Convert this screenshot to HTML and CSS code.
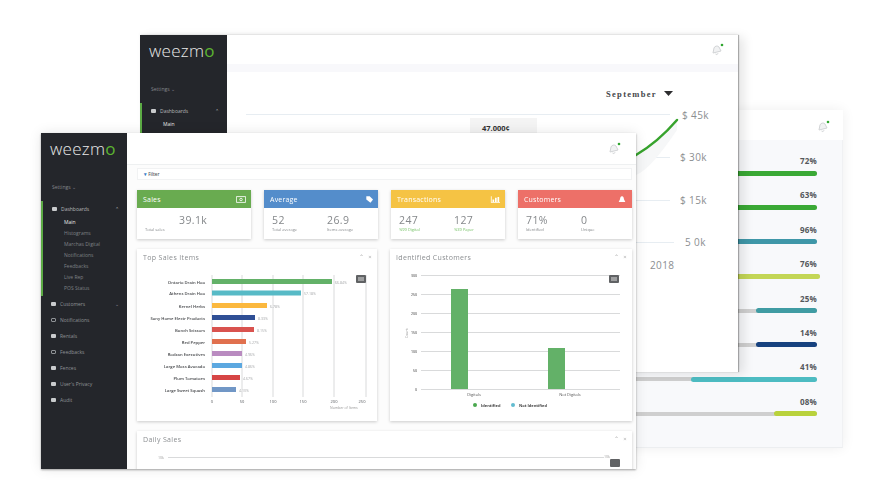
FILE: index.html
```html
<!DOCTYPE html>
<html lang="en">
<head>
<meta charset="utf-8">
<title>Weezmo dashboard</title>
<link rel="stylesheet" href="styles.css">
</head>
<body>
<div class="stage">

  <section class="win win-rates">
    <header class="top top-rates">
      <svg class="bell" viewBox="0 0 14 14"><path class="bell-shape" d="M3 10l1-5a3 3 0 0 1 5-1l2 4zM5.500 11a1.500 1.500 0 0 0 2.500-.6"/><circle class="bell-dot" cx="12" cy="2" r="1.300"/></svg>
    </header>
    <div class="rates">
      <div class="rate"><span class="rate-label">72%</span><div class="track"><i class="fill green wide"></i></div></div>
      <div class="rate"><span class="rate-label">63%</span><div class="track"><i class="fill green wide"></i></div></div>
      <div class="rate"><span class="rate-label">96%</span><div class="track"><i class="fill blue wide"></i></div></div>
      <div class="rate"><span class="rate-label">76%</span><div class="track track-over"><i class="fill lime wide"></i></div></div>
      <div class="rate"><span class="rate-label">25%</span><div class="track"><i class="fill teal" style="width:61px"></i></div></div>
      <div class="rate"><span class="rate-label">14%</span><div class="track"><i class="fill navy" style="width:61px"></i></div></div>
      <div class="rate"><span class="rate-label">41%</span><div class="track"><i class="fill aqua" style="width:126px"></i></div></div>
      <div class="rate"><span class="rate-label">08%</span><div class="track"><i class="fill olive" style="width:43px"></i></div></div>
    </div>
  </section>

  <section class="win win-revenue">
    <aside class="side">
      <div class="logo">weezm<span class="logo-o">o</span></div>
      <div class="settings">Settings ⌄</div>
      <div class="group">
        <div class="item"><span class="ico"></span>Dashboards<span class="caret">⌃</span></div>
        <div class="sub sub-on">Main</div>
      </div>
    </aside>
    <div class="main">
      <header class="top top-revenue">
        <svg class="bell" viewBox="0 0 14 14"><path class="bell-shape" d="M3 10l1-5a3 3 0 0 1 5-1l2 4zM5.500 11a1.500 1.500 0 0 0 2.500-.6"/><circle class="bell-dot" cx="12" cy="2" r="1.300"/></svg>
      </header>
      <div class="band"></div>
      <svg class="chart-revenue" viewBox="227 72 511 300">
        <text class="month" x="606" y="97">September</text>
        <path class="month-arrow" d="M664 91h9l-4.500 5z"/>
        <path class="grid-soft" d="M246 114.500H670M646 157.500H670M636 200.500H670M636 242.500H674"/>
        <rect class="tip" x="470" y="118" width="67" height="30"/>
        <text class="tip-text" x="482" y="131">47.000¢</text>
        <path class="area" d="M636 155Q660 140 677 120V130Q650 170 636 175Z"/>
        <path class="line" d="M636 155Q658 142 677 120"/>
        <text class="axis-big" x="682" y="119">$ 45k</text>
        <text class="axis-big" x="680" y="161">$ 30k</text>
        <text class="axis-big" x="680" y="204">$ 15k</text>
        <text class="axis-big" x="685" y="246">5 0k</text>
        <text class="axis-big" x="650" y="269">2018</text>
      </svg>
    </div>
  </section>

  <section class="win win-front">
    <aside class="side">
      <div class="logo">weezm<span class="logo-o">o</span></div>
      <div class="settings">Settings ⌄</div>
      <div class="group">
        <div class="item"><span class="ico"></span>Dashboards<span class="caret">⌃</span></div>
        <div class="sub sub-on">Main</div>
        <div class="sub">Histograms</div>
        <div class="sub">Marchas Digital</div>
        <div class="sub">Notifications</div>
        <div class="sub">Feedbacks</div>
        <div class="sub">Live Rep</div>
        <div class="sub">POS Status</div>
      </div>
      <nav class="nav">
        <div class="item"><span class="ico"></span>Customers<span class="caret">⌄</span></div>
        <div class="item"><span class="ico ico-line"></span>Notifications</div>
        <div class="item"><span class="ico"></span>Rentals</div>
        <div class="item"><span class="ico ico-line"></span>Feedbacks</div>
        <div class="item"><span class="ico"></span>Fences</div>
        <div class="item"><span class="ico"></span>User's Privacy</div>
        <div class="item"><span class="ico"></span>Audit</div>
      </nav>
    </aside>
    <div class="main main-front">
      <header class="top top-front">
        <svg class="bell" viewBox="0 0 14 14"><path class="bell-shape" d="M3 10l1-5a3 3 0 0 1 5-1l2 4zM5.500 11a1.500 1.500 0 0 0 2.500-.6"/><circle class="bell-dot" cx="12" cy="2" r="1.300"/></svg>
      </header>
      <div class="content">
        <div class="filter"><span class="filter-mark">▾</span> Filter</div>

        <div class="cards">
          <article class="card">
            <div class="card-head head-green">Sales
              <svg class="card-ico" viewBox="0 0 12 8"><path class="ico-stroke" d="M.5.500h11v7H.5z"/><circle class="ico-stroke" cx="6" cy="4" r="1.500"/></svg>
            </div>
            <div class="card-body">
              <div class="stat stat-wide"><b class="num num-center">39.1k</b><span class="cap">Total sales</span></div>
            </div>
          </article>
          <article class="card">
            <div class="card-head head-blue">Average
              <svg class="card-ico" viewBox="0 0 12 8"><path class="ico-fill" d="M4 0h4l4 4-3 4-5-4z"/></svg>
            </div>
            <div class="card-body">
              <div class="stat"><b class="num">52</b><span class="cap">Total average</span></div>
              <div class="stat"><b class="num">26.9</b><span class="cap">Items average</span></div>
            </div>
          </article>
          <article class="card">
            <div class="card-head head-yellow">Transactions
              <svg class="card-ico" viewBox="0 0 12 8"><path class="ico-fill" d="M1 0h1v7h10v1H1zM3 4h2v3H3zM6 2h2v5H6zM9 1h2v6H9z"/></svg>
            </div>
            <div class="card-body">
              <div class="stat"><b class="num">247</b><span class="cap cap-green">%99 Digital</span></div>
              <div class="stat"><b class="num">127</b><span class="cap cap-green">%39 Paper</span></div>
            </div>
          </article>
          <article class="card">
            <div class="card-head head-red">Customers
              <svg class="card-ico" viewBox="0 0 12 8"><path class="ico-fill" d="M6 0c2 0 2 2 2.500 4l1.500 3H2l1.500-3C4 2 4 0 6 0z"/></svg>
            </div>
            <div class="card-body">
              <div class="stat"><b class="num">71%</b><span class="cap">Identified</span></div>
              <div class="stat"><b class="num">0</b><span class="cap">Unique</span></div>
            </div>
          </article>
        </div>

        <div class="panels">
          <article class="panel">
            <div class="panel-head"><span>Top Sales Items</span><span class="tools">⌃ ×</span></div>
            <svg class="chart" viewBox="137 269 240 152">
              <path class="grid-x" d="M212 275V397M242 275V397M273 275V397M303 275V397M334 275V397M366 275V397"/>
              <g class="bar-names">
                <text x="205" y="284">Ontario Drain Hoo</text>
                <text x="205" y="295">Athens Drain Hoo</text>
                <text x="205" y="308">Kernel Herbs</text>
                <text x="205" y="320">Sony Home Electr Products</text>
                <text x="205" y="332">Bunch Scissors</text>
                <text x="205" y="344">Red Pepper</text>
                <text x="205" y="356">Rodzan Executives</text>
                <text x="205" y="368">Large Moss Avocado</text>
                <text x="205" y="380">Plum Tomatoes</text>
                <text x="205" y="392">Large Sweet Squash</text>
              </g>
              <rect class="b1" x="212" y="279" width="120" height="5"/>
              <rect class="b2" x="212" y="290.500" width="89" height="5"/>
              <rect class="b3" x="212" y="303" width="55" height="5"/>
              <rect class="b4" x="212" y="315" width="43" height="5"/>
              <rect class="b5" x="212" y="327" width="42" height="5"/>
              <rect class="b6" x="212" y="339" width="34" height="5"/>
              <rect class="b7" x="212" y="351" width="30" height="5"/>
              <rect class="b8" x="212" y="363" width="30" height="5"/>
              <rect class="b9" x="212" y="375" width="28" height="5"/>
              <rect class="b10" x="212" y="387" width="24" height="5"/>
              <g class="bar-values">
                <text x="335" y="284">66.84%</text>
                <text x="304" y="295">57.18%</text>
                <text x="270" y="308">6.78%</text>
                <text x="258" y="320">8.33%</text>
                <text x="257" y="332">8.15%</text>
                <text x="249" y="344">5.27%</text>
                <text x="245" y="356">4.96%</text>
                <text x="245" y="368">4.86%</text>
                <text x="243" y="380">4.67%</text>
                <text x="239" y="392">4.10%</text>
              </g>
              <g class="axis-small">
                <text x="212" y="403">0</text>
                <text x="242" y="403">50</text>
                <text x="273" y="403">100</text>
                <text x="303" y="403">150</text>
                <text x="334" y="403">200</text>
                <text x="362" y="403">250</text>
              </g>
              <text class="axis-title" x="330" y="409">Number of Items</text>
              <rect class="menu-btn" x="356" y="275" width="10" height="8" rx="1"/>
              <path class="menu-lines" d="M358 278h6M358 280h6"/>
            </svg>
          </article>
          <article class="panel">
            <div class="panel-head"><span>Identified Customers</span><span class="tools">⌃ ×</span></div>
            <svg class="chart" viewBox="390 269 242 152">
              <path class="grid-y" d="M421 275.500H620M421 294.500H620M421 313.500H620M421 332.500H620M421 351.500H620M421 370.500H620M421 389.500H620"/>
              <rect class="b1" x="451" y="289" width="17" height="100"/>
              <rect class="b1" x="548" y="348" width="17" height="41"/>
              <g class="ticks">
                <text x="417" y="277">300</text>
                <text x="417" y="296">250</text>
                <text x="417" y="315">200</text>
                <text x="417" y="334">150</text>
                <text x="417" y="353">100</text>
                <text x="417" y="372">50</text>
                <text x="417" y="391">0</text>
              </g>
              <text class="axis-title" transform="rotate(-90 408 338)" x="408" y="338">Count</text>
              <text class="bar-label" x="474" y="396">Digitals</text>
              <text class="bar-label" x="570" y="396">Not Digitals</text>
              <circle class="dot-green" cx="475" cy="405" r="2"/>
              <text class="legend" x="481" y="407">Identified</text>
              <circle class="dot-blue" cx="513" cy="405" r="2"/>
              <text class="legend" x="519" y="407">Not Identified</text>
              <rect class="menu-btn" x="609" y="275" width="10" height="8" rx="1"/>
              <path class="menu-lines" d="M611 278h6M611 280h6"/>
            </svg>
          </article>
        </div>

        <article class="panel panel-daily">
          <div class="panel-head"><span>Daily Sales</span><span class="tools">⌃ ×</span></div>
          <svg class="chart" viewBox="137 451 495 20">
            <text class="axis-title" x="158" y="459">10k</text>
            <path class="grid-y" d="M168 457.500H604"/>
            <text class="axis-title" x="604" y="458">10k</text>
            <rect class="menu-btn" x="610" y="459" width="10" height="8" rx="1"/>
          </svg>
        </article>
      </div>
    </div>
  </section>
</div>
</body>
</html>
```

FILE: styles.css
```css
* { box-sizing: border-box; }
html, body { margin: 0; background: #fff; }
body { font-family: "Open Sans", "Liberation Sans", sans-serif; overflow: hidden; }

.stage { position: relative; width: 890px; height: 500px; overflow: hidden; filter: blur(0.7px); }

.win { position: absolute; display: flex; background: #fff; overflow: hidden; }
.win-rates { left: 500px; top: 110px; width: 343px; height: 338px; flex-direction: column; box-shadow: 0 0 12px rgba(0,0,0,.07); }
.win-revenue { left: 140px; top: 35px; width: 598px; height: 337px; box-shadow: 1px 0 1px rgba(0,0,0,.28), 6px 2px 10px rgba(0,0,0,.1), 0 -2px 3px rgba(0,0,0,.04); }
.win-front { left: 41px; top: 133px; width: 595px; height: 336px; box-shadow: 0 1px 2px rgba(0,0,0,.35), 0 0 12px rgba(0,0,0,.1); }

/* top bars */
.top { display: flex; justify-content: flex-end; align-items: center; background: #fff; flex: none; }
.top-rates { height: 30px; padding: 4px 13px 0 0; }
.top-revenue { height: 29px; padding-right: 14px; }
.top-front { height: 32px; padding-right: 15px; border-bottom: 1px solid #eef0f1; }
.bell { width: 14px; height: 14px; }
.bell-shape { fill: #f1f2f3; stroke: #d2d4d6; stroke-width: 1; }
.bell-dot { fill: #2fa52f; }

/* window three */
.rates { flex: 1; background: #f8f9fb; padding: 15px 25px 0 0; display: flex; flex-direction: column; border-right: 1px solid #f0f1f3; border-bottom: 1px solid #eceef0; }
.rate { height: 34.4px; display: flex; flex-direction: column; align-items: flex-end; }
.rate-label { font: bold 8px/12px "Open Sans", sans-serif; color: #55585c; height: 16px; letter-spacing: .2px; }
.track { width: 100%; height: 4px; border-radius: 2px; background: #cfcfcf; display: flex; justify-content: flex-end; }
.track-over { width: calc(100% + 3px); margin-right: -3px; }
.fill { display: block; height: 5px; margin-top: -.5px; border-radius: 3px; }
.wide { width: 100%; }
.green { background: #3aa935; }
.blue { background: #3f97a8; }
.lime { background: #c3d656; }
.teal { background: #409ca3; }
.navy { background: #17427f; }
.aqua { background: #4dbcc2; }
.olive { background: #b9d23c; }

/* sidebar */
.side { flex: none; width: 86px; background: #24262b; color: #85888c; font-size: 5px; display: flex; flex-direction: column; }
.win-revenue .side { width: 87px; }
.logo { height: 48px; padding: 3px 0 0 9px; font: 300 17px/26px "Open Sans", sans-serif; color: #e9e9e9; letter-spacing: .3px; flex: none; }
.logo-o { color: #5cb531; font-weight: 400; }
.settings { height: 20px; padding: 0 0 0 11px; line-height: 12px; flex: none; }
.group { border-left: 2px solid #5cab45; height: 95px; flex: none; }
.item { display: flex; align-items: center; height: 16px; padding-left: 10px; gap: 4px; color: #8f9296; }
.group .item { color: #b4b6b9; padding-left: 9px; }
.ico { width: 5px; height: 4px; background: #c9cbcd; flex: none; border-radius: 1px; }
.ico-line { background: none; border: 1px solid #8f9296; }
.caret { margin-left: auto; padding-right: 8px; }
.sub { height: 11px; line-height: 11px; padding-left: 21px; color: #7e8185; }
.sub-on { color: #e6e6e6; }
.nav { display: flex; flex-direction: column; }

/* main column */
.main { flex: 1; min-width: 0; display: flex; flex-direction: column; background: #fff; }
.band { height: 8px; background: #f8f8fb; flex: none; }
.chart-revenue { width: 511px; height: 300px; display: block; flex: none; }
.month { font: bold 8.500px "Liberation Serif", serif; fill: #45474a; letter-spacing: 1.3px; }
.month-arrow { fill: #2d2d2f; }
.grid-soft { stroke: #e7edf2; stroke-width: 1; fill: none; }
.tip { fill: #f4f4f4; }
.tip-text { font: bold 7.500px "Open Sans", sans-serif; fill: #333; }
.line { fill: none; stroke: #37a32d; stroke-width: 2.500; stroke-linecap: round; }
.area { fill: #f6f7f8; }
.axis-big { font: 10px "Open Sans", sans-serif; fill: #8b8e91; letter-spacing: .4px; }

.content { flex: 1; min-height: 0; padding: 3px 4px 0 10px; background: #fcfcfc; display: flex; flex-direction: column; gap: 10px; }
.filter { flex: none; height: 12px; line-height: 11px; padding-left: 6px; background: #fff; border: 1px solid #f1f2f3; font-size: 4.500px; font-weight: 600; color: #55585c; }
.filter-mark { color: #3d82c7; }

/* cards */
.cards { display: grid; grid-template-columns: repeat(4, 114px); column-gap: 13px; height: 49px; flex: none; }
.card { background: #fff; box-shadow: 0 1px 3px rgba(0,0,0,.2); display: flex; flex-direction: column; }
.card-head { height: 18px; flex: none; color: #fff; font-size: 7px; letter-spacing: .2px; padding: 0 5px 0 6px; display: flex; align-items: center; justify-content: space-between; }
.head-green { background: #69ab50; }
.head-blue { background: #548dcb; }
.head-yellow { background: #f5c344; }
.head-red { background: #ed7068; }
.card-ico { width: 10px; height: 7px; }
.ico-stroke { fill: none; stroke: #fff; stroke-width: 1; }
.ico-fill { fill: #fff; }
.card-body { flex: 1; display: grid; grid-template-columns: 55px 1fr; padding: 5px 8px 0; }
.stat { display: flex; flex-direction: column; }
.stat-wide { grid-column: 1 / 3; }
.num { font-weight: 400; font-size: 10.500px; line-height: 14px; color: #85888b; letter-spacing: .4px; }
.num-center { padding-left: 34px; }
.cap { font-size: 4px; line-height: 6px; color: #85888b; }
.cap-green { color: #6fbf5f; }

/* panels */
.panels { display: grid; grid-template-columns: 240px 242px; column-gap: 13px; height: 172px; flex: none; }
.panel { background: #fff; box-shadow: 0 1px 3px rgba(0,0,0,.2); display: flex; flex-direction: column; overflow: hidden; }
.panel-head { height: 20px; flex: none; padding: 3px 5px 0 6px; display: flex; justify-content: space-between; font-size: 7px; letter-spacing: .35px; line-height: 11px; color: #8b8e91; }
.tools { font-size: 6px; word-spacing: 2px; color: #aaa; }
.chart { display: block; width: 100%; flex: none; }
.panel-daily { flex: none; height: 60px; }

/* chart bits */
.grid-x, .grid-y { stroke: #d9dadb; stroke-width: 1; fill: none; }
.bar-names text { font: 600 4.200px "Open Sans", sans-serif; fill: #45474a; text-anchor: end; }
.bar-values text { font: 3.500px "Open Sans", sans-serif; fill: #a5a7a9; }
.axis-small text { font: 4px "Open Sans", sans-serif; fill: #55585c; text-anchor: middle; }
.axis-title { font: 3.500px "Open Sans", sans-serif; fill: #999; }
.ticks text { font: 600 3.500px "Open Sans", sans-serif; fill: #666; text-anchor: end; }
.bar-label { font: 4px "Open Sans", sans-serif; fill: #555; text-anchor: middle; }
.legend { font: bold 4px "Open Sans", sans-serif; fill: #444; }
.dot-green { fill: #4aa84f; }
.dot-blue { fill: #62bcd0; }
.menu-btn { fill: #606264; }
.menu-lines { stroke: #ddd; stroke-width: 1; fill: none; }
.b1 { fill: #63b168; }
.b2 { fill: #57bac6; }
.b3 { fill: #fbb83e; }
.b4 { fill: #2f4f95; }
.b5 { fill: #d9534f; }
.b6 { fill: #e0704e; }
.b7 { fill: #b98bc0; }
.b8 { fill: #5ca8e0; }
.b9 { fill: #d64545; }
.b10 { fill: #7197c6; }
```
